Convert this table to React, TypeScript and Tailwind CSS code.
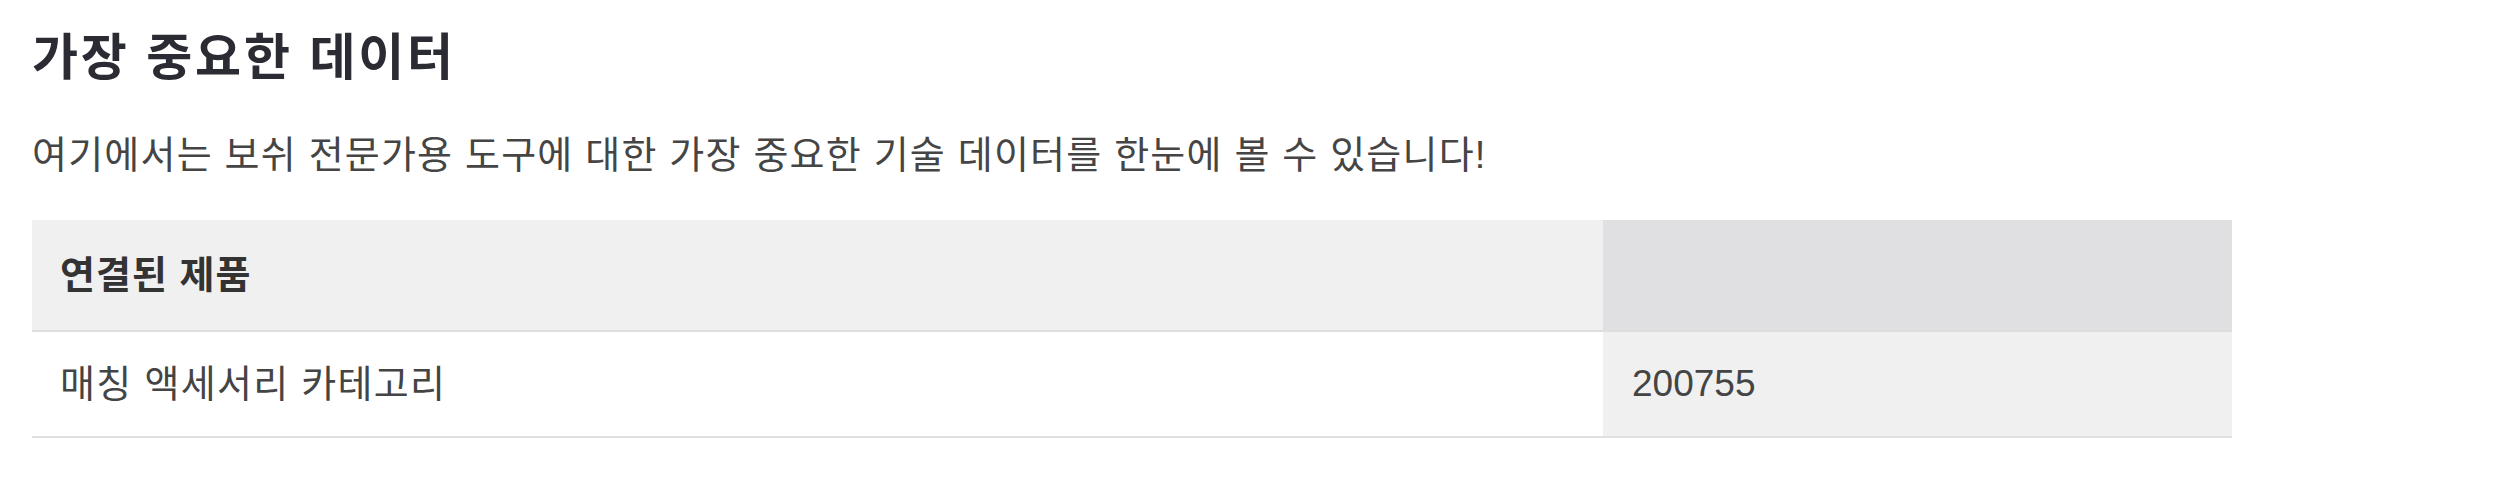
export default function App() {
  const font = { fontFamily: '"Liberation Sans", "Noto Sans CJK KR", sans-serif' }

  return (
    <div className="w-[2508px] h-[500px] bg-white pl-8" style={font}>
      <h2 className="pt-[28px] text-[50px] leading-[60px] tracking-[2.8px] font-bold text-[#2b2b33]">가장 중요한 데이터</h2>
      <p className="mt-[42px] text-[38px] leading-[50px] tracking-[1.2px] text-[#454545]">
        여기에서는 보쉬 전문가용 도구에 대한 가장 중요한 기술 데이터를 한눈에 볼 수 있습니다!
      </p>

      {/* 데이터 표 */}
      <div className="mt-[40px] w-[2200px] grid grid-cols-[1571px_629px]">
        <div className="h-[112px] flex items-center pl-[28px] bg-[#f0f0f0] border-b-2 border-[#dedede] text-[38px] tracking-[1px] font-bold text-[#333]">
          연결된 제품
        </div>
        <div className="h-[112px] bg-[#e0e0e2] border-b-2 border-[#dedede]"></div>

        <div className="h-[106px] flex items-center pl-[28px] bg-white border-b-2 border-[#e0e0e0] text-[38px] tracking-[1.3px] text-[#444]">
          매칭 액세서리 카테고리
        </div>
        <div className="h-[106px] flex items-center pl-[29px] bg-[#f0f0f0] border-b-2 border-[#e0e0e0] text-[37px] text-[#444]">
          200755
        </div>
      </div>
    </div>
  )
}
